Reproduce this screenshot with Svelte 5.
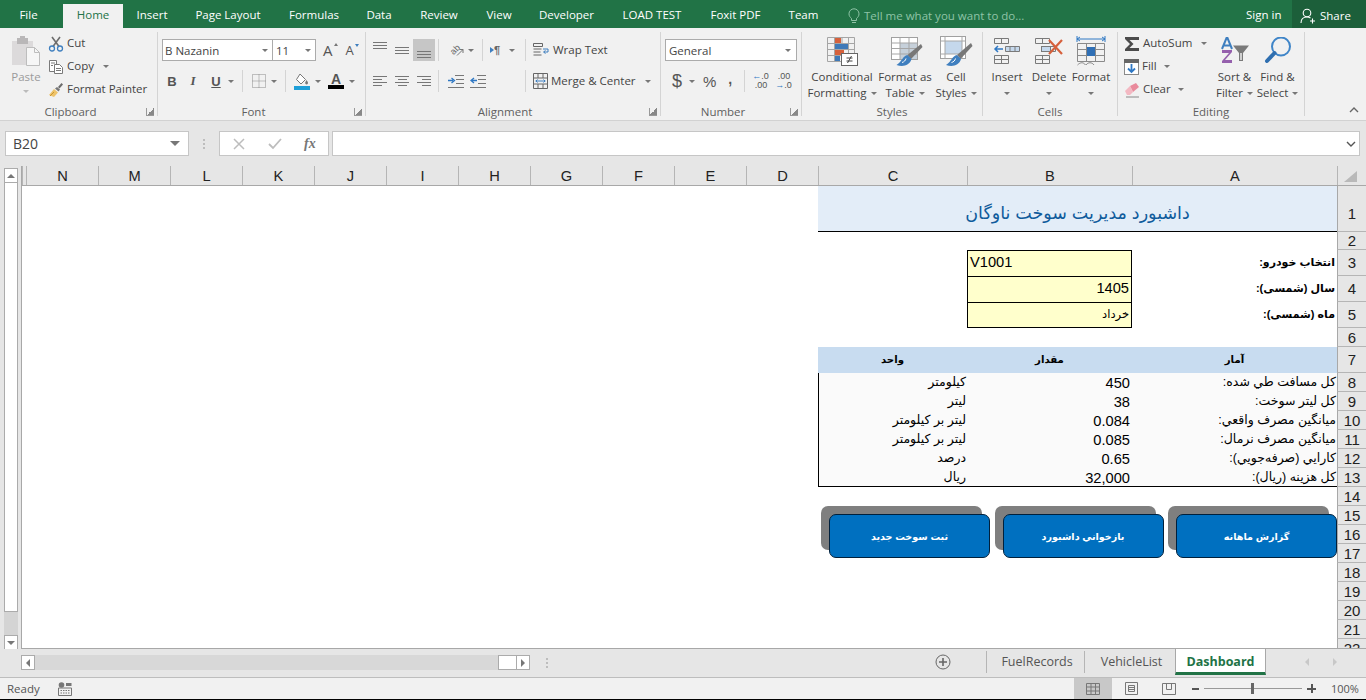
<script>
  const tabs = [
    { label: 'File', w: 57 }, { label: 'Home', w: 60, active: true }, { label: 'Insert', w: 58 },
    { label: 'Page Layout', w: 94 }, { label: 'Formulas', w: 78 }, { label: 'Data', w: 52 },
    { label: 'Review', w: 68 }, { label: 'View', w: 52 }, { label: 'Developer', w: 83 },
    { label: 'LOAD TEST', w: 88 }, { label: 'Foxit PDF', w: 79 }, { label: 'Team', w: 57 }
  ];
  const columns = ['N', 'M', 'L', 'K', 'J', 'I', 'H', 'G', 'F', 'E', 'D'];
  const stats = [
    { name: 'کل مسافت طي شده:', value: '450', unit: 'کیلومتر' },
    { name: 'کل لیتر سوخت:', value: '38', unit: 'لیتر' },
    { name: 'میانگین مصرف واقعي:', value: '0.084', unit: 'لیتر بر کیلومتر' },
    { name: 'میانگین مصرف نرمال:', value: '0.085', unit: 'لیتر بر کیلومتر' },
    { name: 'کارایي (صرفه‌جویي):', value: '0.65', unit: 'درصد' },
    { name: 'کل هزینه (ریال):', value: '32,000', unit: 'ریال' }
  ];
  const buttons = ['گزارش ماهانه', 'بازخواني داشبورد', 'ثبت سوخت جدید'];
  const blankRows = [
    [14, 19], [15, 19], [16, 19], [17, 19], [18, 19], [19, 19], [20, 19], [21, 19], [22, 19]
  ];
</script>

<div class="app">
  <div class="titlebar">
    {#each tabs as tab}
      <div class="tab" class:active={tab.active} style="width:{tab.w}px">{tab.label}</div>
    {/each}
    <div class="tellme">
      <svg width="12" height="16" viewBox="0 0 12 16" fill="none" stroke="#8fc3a6"><path d="M3.5 10.5C2 9 1 8 1 5.8a5 5 0 0 1 10 0c0 2.2-1 3.200-2.500 4.700v2h-5zM4 14.500h4"/></svg>
      <span>Tell me what you want to do...</span>
    </div>
    <div class="signin">Sign in</div>
    <div class="share">
      <svg width="16" height="16" viewBox="0 0 16 16" fill="none" stroke="#fff" stroke-width="1.100"><circle cx="7" cy="5" r="3.800"/><path d="M1 15c0-4 2.500-6 6-6 1.500 0 2.500.4 3.500 1M10 13h5M12.500 10.500v5"/></svg>
      <span>Share</span>
    </div>
  </div>

  <div class="ribbon">
    <div class="group clipboard">
      <div class="body">
        <div class="big paste">
          <div class="big-icon">
            <svg width="30" height="32" viewBox="0 0 30 32"><rect x="1" y="6" width="21" height="24" fill="#dcdadb"/><rect x="6" y="3" width="11" height="6" fill="#b9b7b8"/><rect x="9" y="1" width="5" height="3" fill="#b9b7b8"/><path d="M15.500 12.500h8l5 5v13h-13z" fill="#f6f6f6" stroke="#bdbdbd"/><path d="M23.500 12.500v5h5" fill="none" stroke="#bdbdbd"/></svg>
          </div>
          <div class="big-text muted">Paste</div>
          <i class="caret light"></i>
        </div>
        <div class="stack">
          <div class="small">
            <svg width="16" height="16" viewBox="0 0 16 16" fill="none"><path d="M4 1l7 9.500M12 1L5 10.500" stroke="#6d6d6d" stroke-width="1.600"/><circle cx="4" cy="12.500" r="2.500" stroke="#3f7fbf" stroke-width="1.300"/><circle cx="12" cy="12.500" r="2.500" stroke="#3f7fbf" stroke-width="1.300"/></svg>
            <span>Cut</span>
          </div>
          <div class="small">
            <svg width="16" height="16" viewBox="0 0 16 16" fill="#fff" stroke="#7a7a7a"><path d="M1.500 1.500h7v11h-7z"/><path d="M6.500 5.500h5l3 3v6h-8z"/><path d="M3 4h4M3 6.500h2M8 9.500h5M8 11.500h5" fill="none"/></svg>
            <span>Copy</span>
            <i class="caret copy-caret"></i>
          </div>
          <div class="small">
            <svg width="16" height="16" viewBox="0 0 16 16"><path d="M1 13l5-6 4 3.500-4 4.500z" fill="#eec36a"/><path d="M2 14l4-4" stroke="#c89632"/><path d="M7 6.500l3.500 3 1.500-2-3-2.500z" fill="#777"/><path d="M10 5l3.500-4 1.500 1.500-3.500 4z" fill="#6b6b6b"/></svg>
            <span>Format Painter</span>
          </div>
        </div>
      </div>
      <div class="label lnch">Clipboard<i class="launcher"></i></div>
    </div>

    <div class="group font">
      <div class="body col">
        <div class="line top">
          <div class="select fontname"><span>B Nazanin</span><i class="caret"></i></div>
          <div class="select fontsize"><span>11</span><i class="caret"></i></div>
          <span class="grow big-a">A<i class="up"></i></span>
          <span class="grow small-a">A<i class="down"></i></span>
        </div>
        <div class="line bottom">
          <b class="fmt bold">B</b>
          <span class="fmt italic">I</span>
          <span class="fmt under">U</span>
          <i class="caret"></i>
          <i class="sep"></i>
          <svg class="borders" width="14" height="14" viewBox="0 0 14 14" fill="none" stroke="#8a8a8a" stroke-dasharray="1 1"><path d="M.5.5h13v13H.5zM7 .5v13M.5 7h13"/></svg>
          <i class="caret"></i>
          <i class="sep"></i>
          <svg class="fill-ic" width="16" height="17" viewBox="0 0 16 17"><path d="M6 1l5.500 5.500L7 11 2.500 6.500z" fill="#fff" stroke="#777"/><path d="M12.500 7c1 1.500 1.500 2.300 1.500 3a1.400 1.400 0 0 1-2.800 0c0-.7.500-1.500 1.300-3z" fill="#777"/><rect y="13" width="16" height="4" fill="#1e9fd8"/></svg>
          <i class="caret"></i>
          <span class="color-a">A</span>
          <i class="caret"></i>
        </div>
      </div>
      <div class="label lnch">Font<i class="launcher"></i></div>
    </div>

    <div class="group align">
      <div class="body col">
        <div class="line top">
          <span class="lines t"><i></i><i></i><i></i></span>
          <span class="lines m"><i></i><i></i><i></i></span>
          <span class="lines b on"><i></i><i></i><i></i></span>
          <i class="sep"></i>
          <svg class="orient" width="16" height="16" viewBox="0 0 16 16" fill="none"><text x="2" y="11" transform="rotate(-45 6 9)" font-family="Liberation Sans, sans-serif" font-size="9" fill="#666" stroke="none">ab</text><path d="M8 13.500l6-6M14 11V7.500h-3.500" stroke="#777"/></svg>
          <i class="caret"></i>
          <i class="sep"></i>
          <span class="rtl-ic"><i></i>¶</span>
          <i class="caret rtl-caret"></i>
          <i class="sep"></i>
          <div class="small">
            <svg width="17" height="16" viewBox="0 0 17 16" fill="none" stroke="#666"><path d="M.5 1.500h9v3h-9zM.5 7h8M.5 10h7M.5 13h8"/><path d="M10 7h5v3h-4M12.500 8.500L10.500 10l2 1.500" stroke="#3f7fbf"/></svg>
            <span>Wrap Text</span>
          </div>
        </div>
        <div class="line bottom">
          <span class="lines l"><i></i><i></i><i></i><i></i></span>
          <span class="lines c"><i></i><i></i><i></i><i></i></span>
          <span class="lines r"><i></i><i></i><i></i><i></i></span>
          <i class="sep"></i>
          <svg class="indent" width="16" height="13" viewBox="0 0 16 13" fill="none" stroke="#777"><path d="M7 .5h9M8 4.500h8M8 8.500h8M0 12.500h16"/><path d="M0 5.500h5M3.500 3l3 2.500-3 2.500" stroke="#2f78c4" stroke-width="1.300"/></svg>
          <svg class="outdent" width="16" height="13" viewBox="0 0 16 13" fill="none" stroke="#777"><path d="M7 .5h9M8 4.500h8M8 8.500h8M0 12.500h16"/><path d="M7 5.500H2M4 3L1 5.500 4 8" stroke="#2f78c4" stroke-width="1.300"/></svg>
          <i class="sep far"></i>
          <div class="small">
            <svg width="15" height="16" viewBox="0 0 15 16" fill="none" stroke="#666"><path d="M.5.500h14v15H.5zM.5 5h14M.5 11h14M5 .500V5M10 .500V5M5 11v4.500M10 11v4.500"/><path d="M2.500 8h10M4.500 6.500L3 8l1.500 1.500M10.500 6.500L12 8l-1.500 1.500" stroke="#3f7fbf"/></svg>
            <span>Merge &amp; Center</span>
            <i class="caret merge-caret"></i>
          </div>
        </div>
      </div>
      <div class="label lnch">Alignment<i class="launcher"></i></div>
    </div>

    <div class="group number">
      <div class="body col">
        <div class="line top">
          <div class="select general"><span>General</span><i class="caret"></i></div>
        </div>
        <div class="line bottom">
          <span class="sym dollar">$</span>
          <i class="caret"></i>
          <span class="sym pct">%</span>
          <b class="sym comma">,</b>
          <i class="sep"></i>
          <span class="dec d1"><em>←</em>.0<br />.00</span>
          <span class="dec d2">.00<br /><em>→</em>.0</span>
        </div>
      </div>
      <div class="label lnch">Number<i class="launcher"></i></div>
    </div>

    <div class="group styles">
      <div class="body">
        <div class="big cond">
          <div class="big-icon">
            <svg width="31" height="30" viewBox="0 0 31 30" fill="none"><path d="M.5 1.500h27v24H.5zM7.500 1.500v24M15 1.500v24M21.500 1.500v24M.5 7.500h27M.5 13.500h27M.5 19.500h27" stroke="#a5a5a5"/><rect x="8" y="2" width="6" height="5" fill="#d6613c"/><rect x="8" y="8" width="13" height="5" fill="#3e79b8"/><rect x="8" y="14" width="9" height="5" fill="#d6613c"/><rect x="8" y="20" width="5" height="5" fill="#3e79b8"/><rect x="14.500" y="17.500" width="16" height="12" fill="#fff" stroke="#666"/><path d="M19.500 22h6M19.500 25h6M24.500 20l-4 7" stroke="#444"/></svg>
          </div>
          <div class="big-text">Conditional<br />Formatting<i class="caret inl"></i></div>
        </div>
        <div class="big astable">
          <div class="big-icon">
            <svg width="36" height="32" viewBox="0 0 36 32" fill="none"><rect x="4.500" y="2.500" width="26" height="22" fill="#fff" stroke="#a0a0a0"/><rect x="13" y="8" width="17" height="16" fill="#c6d0da"/><path d="M13 2.500v22M22 2.500v22M4.500 8h26M4.500 13.500h26M4.500 19h26" stroke="#a5a5a5"/><path d="M34 9L20.500 20l3.500 4L35.500 12z" fill="#777"/><path d="M20.500 20c-5 1-5 6-11 10 6 2 13 1 15-6z" fill="#3f7fbf"/><path d="M15 27.500c2-.5 3.500-2 4-4" stroke="#fff"/></svg>
          </div>
          <div class="big-text">Format as<br />Table<i class="caret inl"></i></div>
        </div>
        <div class="big cellst">
          <div class="big-icon">
            <svg width="34" height="32" viewBox="0 0 34 32" fill="none"><rect x="1.500" y="1.500" width="25" height="22" fill="#fff" stroke="#a0a0a0"/><rect x="6" y="6" width="17" height="13" fill="#c5d8ec"/><path d="M6 1.500v22M23 1.500v22M1.500 6h25M1.500 19h25" stroke="#a8a8a8"/><path d="M32 8L18 20l3.500 4L33.500 11z" fill="#777"/><path d="M18 20c-5 1-5 6-11 10 6 2 13 1 15-6z" fill="#3f7fbf"/><path d="M12.500 27.500c2-.5 3.500-2 4-4" stroke="#fff"/></svg>
          </div>
          <div class="big-text">Cell<br />Styles<i class="caret inl"></i></div>
        </div>
      </div>
      <div class="label">Styles</div>
    </div>

    <div class="group cells">
      <div class="body">
        <div class="big ins">
          <div class="big-icon">
            <svg width="28" height="28" viewBox="0 0 28 28" fill="none" stroke="#7a7a7a"><path d="M1.500 1.500h14v5h-14zM8.500 1.500v5M1.500 18.500h14v8h-14zM1.500 22.500h14M8.500 18.500v8"/><path d="M12.500 9.500h14v5h-14zM17 9.500v5M22 9.500v5" fill="#c5d8ec"/><path d="M10 12H2M5 9l-3 3 3 3" stroke="#2f78c4" stroke-width="1.500"/></svg>
          </div>
          <div class="big-text">Insert<br /><i class="caret"></i></div>
        </div>
        <div class="big del">
          <div class="big-icon">
            <svg width="30" height="28" viewBox="0 0 30 28" fill="none" stroke="#7a7a7a"><path d="M1.500 1.500h14v5h-14zM8.500 1.500v5M1.500 18.500h14v8h-14zM1.500 22.500h14M8.500 18.500v8M7.500 9.500h14v5h-14z"/><rect x="7.500" y="9.500" width="9" height="5" fill="#c5d8ec"/><path d="M15 3l13 14M28 3L15 17" stroke="#d6603c" stroke-width="2.200"/></svg>
          </div>
          <div class="big-text">Delete<br /><i class="caret"></i></div>
        </div>
        <div class="big fmtc">
          <div class="big-icon">
            <svg width="30" height="31" viewBox="0 0 30 31" fill="none" stroke="#8a8a8a"><path d="M1 1v6M29 1v6" stroke="#2f78c4"/><path d="M1 4h28M4 2L1 4l3 2M26 2l3 2-3 2" stroke="#2f78c4"/><path d="M1.500 8.500h27v18h-27zM1.500 14.500h27M1.500 20.500h27M10.500 8.500v18M19.500 8.500v18"/><rect x="11" y="12" width="8" height="9" fill="#2f6fb5" stroke="none"/><path d="M1.500 30c3-3 6-3 8 0M10 30c2-3 6-3 8 0"/></svg>
          </div>
          <div class="big-text">Format<br /><i class="caret"></i></div>
        </div>
      </div>
      <div class="label">Cells</div>
    </div>

    <div class="group editing">
      <div class="body">
        <div class="stack editstack">
          <div class="small">
            <svg width="16" height="16" viewBox="0 0 16 16"><path d="M1 1h14v3H5.500L9.500 8l-4 4H15v3H1v-2l5-5-5-5z" fill="#4b4b4b"/></svg>
            <span>AutoSum</span>
            <i class="caret auto-caret"></i>
          </div>
          <div class="small">
            <svg width="15" height="16" viewBox="0 0 15 16"><rect x=".5" y=".5" width="14" height="15" fill="#fff" stroke="#8a8a8a"/><rect width="15" height="4" fill="#666"/><path d="M7.500 5v8M4 9.500l3.500 3.500L11 9.500" fill="none" stroke="#2f78c4" stroke-width="1.800"/></svg>
            <span>Fill</span>
            <i class="caret inl"></i>
          </div>
          <div class="small">
            <svg width="16" height="16" viewBox="0 0 16 16"><path d="M6 4l6-3 3 4-6 5z" fill="#e98a9c"/><path d="M1 9l5-5 3 6-3 3H3z" fill="#f3b8c2"/><path d="M2 15h13" stroke="#888"/></svg>
            <span>Clear</span>
            <i class="caret inl"></i>
          </div>
        </div>
        <div class="big sortf">
          <div class="big-icon">
            <svg width="30" height="28" viewBox="0 0 30 28"><path d="M2 12L6.500 1h1L12 12M3.500 8.500h7" fill="none" stroke="#3f7fbf" stroke-width="2"/><path d="M2 13h10v2l-7 8h7v3H2v-2l7-8H2z" fill="#9560ad"/><path d="M13 8.500h16l-6 7.500v8h-4v-8z" fill="#7a7a7a"/><path d="M20 16h2v7h-2z" fill="#d0d0d0"/></svg>
          </div>
          <div class="big-text">Sort &amp;<br />Filter<i class="caret inl"></i></div>
        </div>
        <div class="big findsel">
          <div class="big-icon">
            <svg width="28" height="28" viewBox="0 0 28 28" fill="none"><circle cx="17" cy="9.500" r="9" stroke="#3f85c8" stroke-width="2"/><path d="M10.500 16L3 24" stroke="#2f6fb0" stroke-width="4" stroke-linecap="round"/></svg>
          </div>
          <div class="big-text">Find &amp;<br />Select<i class="caret inl"></i></div>
        </div>
      </div>
      <div class="label">Editing</div>
    </div>

    <svg class="collapse" width="10" height="6" viewBox="0 0 10 6" fill="none" stroke="#666" stroke-width="1.400"><path d="M1 5l4-4 4 4"/></svg>
  </div>

  <div class="formulabar">
    <div class="namebox"><span>B20</span><i class="caret dark"></i></div>
    <div class="vdots"><i></i><i></i><i></i></div>
    <div class="fxbox">
      <svg width="12" height="12" viewBox="0 0 12 12" fill="none" stroke="#bdbdbd" stroke-width="1.500"><path d="M1 1l10 10M11 1L1 11"/></svg>
      <svg width="14" height="12" viewBox="0 0 14 12" fill="none" stroke="#bdbdbd" stroke-width="1.800"><path d="M1 6l4 4 8-9"/></svg>
      <em>fx</em>
    </div>
    <div class="input">
      <svg width="10" height="6" viewBox="0 0 10 6" fill="none" stroke="#555" stroke-width="1.400"><path d="M1 1l4 4 4-4"/></svg>
    </div>
  </div>

  <div class="sheet">
    <div class="vscroll">
      <div class="vbtn"><i class="tri-up"></i></div>
      <div class="vthumb"></div>
      <div class="vtrack"></div>
      <div class="vbtn"><i class="tri-down"></i></div>
    </div>
    <div class="grid" dir="rtl">
      <div class="colhead">
        <div class="corner"><i></i></div>
        <div class="ch a">A</div>
        <div class="ch b">B</div>
        <div class="ch c">C</div>
        {#each columns.slice().reverse() as col}
          <div class="ch std">{col}</div>
        {/each}
        <div class="ch last"></div>
      </div>

      <div class="row" style="height:46px">
        <div class="rh tall">1</div>
        <div class="title">داشبورد مدیریت سوخت ناوگان</div>
      </div>
      <div class="row" style="height:18px"><div class="rh">2</div></div>
      <div class="row" style="height:26px">
        <div class="rh">3</div>
        <div class="cell a lab">انتخاب خودرو:</div>
        <div class="cell b inp first" dir="ltr">V1001</div>
      </div>
      <div class="row" style="height:26px">
        <div class="rh">4</div>
        <div class="cell a lab">سال (شمسی):</div>
        <div class="cell b inp num">1405</div>
      </div>
      <div class="row" style="height:26px">
        <div class="rh">5</div>
        <div class="cell a lab">ماه (شمسی):</div>
        <div class="cell b inp fa">خرداد</div>
      </div>
      <div class="row" style="height:19px"><div class="rh">6</div></div>
      <div class="row" style="height:26px">
        <div class="rh">7</div>
        <div class="cell a th">آمار</div>
        <div class="cell b th">مقدار</div>
        <div class="cell c th">واحد</div>
      </div>
      {#each stats as s, i}
        <div class="row" style="height:19px">
          <div class="rh">{i + 8}</div>
          <div class="cell a td" class:end={i === 5}>{s.name}</div>
          <div class="cell b td val" class:end={i === 5}>{s.value}</div>
          <div class="cell c td unit" class:end={i === 5}>{s.unit}</div>
        </div>
      {/each}
      {#each blankRows as r}
        <div class="row" style="height:{r[1]}px"><div class="rh">{r[0]}</div></div>
      {/each}

      <div class="macros">
        {#each buttons as b}
          <div class="macro"><span>{b}</span></div>
        {/each}
      </div>
    </div>
  </div>

  <div class="sheetbar">
    <div class="hscroll">
      <div class="hbtn"><i class="tri-left"></i></div>
      <div class="htrack"></div>
      <div class="hthumb"></div>
      <div class="hbtn"><i class="tri-right"></i></div>
    </div>
    <div class="vdots h"><i></i><i></i><i></i></div>
    <div class="addsheet">
      <svg width="16" height="16" viewBox="0 0 16 16" fill="none" stroke="#666"><circle cx="8" cy="8" r="7"/><path d="M8 4v8M4 8h8" stroke-width="1.600"/></svg>
    </div>
    <div class="stab fuel">FuelRecords</div>
    <div class="stab veh">VehicleList</div>
    <div class="stab cur">Dashboard</div>
    <div class="navs"><i class="tri-left pale"></i><i class="tri-right pale"></i></div>
  </div>

  <div class="status">
    <span class="ready">Ready</span>
    <svg class="macro-ic" width="14" height="14" viewBox="0 0 14 14" fill="none"><circle cx="3.500" cy="3" r="2.800" fill="#777"/><rect x="8" y="1" width="5.500" height="3" fill="#777"/><path d="M.5 6h13v7.500H.5z" stroke="#777"/><path d="M2.500 8.500h9M2.500 11h9" stroke="#777" stroke-dasharray="1.500 1"/></svg>
    <div class="views">
      <div class="view on"><svg width="14" height="12" viewBox="0 0 14 12" fill="none" stroke="#777"><path d="M.5.500h13v11H.5zM.5 4h13M.5 8h13M5 .500v11M9.500 .500v11"/></svg></div>
      <div class="view"><svg width="13" height="13" viewBox="0 0 13 13" fill="none" stroke="#777"><path d="M.5.500h12v12H.5zM3.500 3.500h6v6h-6zM3.500 5.500h6M3.500 7.500h6"/></svg></div>
      <div class="view"><svg width="14" height="12" viewBox="0 0 14 12" fill="none" stroke="#777"><path d="M.5.500h13v11H.5zM4.500 .500v6h5v-6"/></svg></div>
    </div>
    <div class="zoom">
      <i class="minus"></i>
      <div class="ztrack"><i></i></div>
      <i class="plus"></i>
      <span>100%</span>
    </div>
  </div>
  <div class="blackbar"></div>
</div>

<style>
  :global(body) { margin: 0; background: #fff; }
  .app {
    width: 1366px; height: 700px; overflow: hidden;
    display: flex; flex-direction: column;
    font-family: "Open Sans", "Noto Sans", sans-serif; font-size: 11.500px; color: #444;
  }
  i { display: block; font-style: normal; }

  /* title bar and tabs */
  .titlebar {
    height: 28px; flex: none; background: #217346; color: #fff;
    display: flex; align-items: flex-end; position: relative;
  }
  .tab { height: 24px; line-height: 22px; text-align: center; flex: none; }
  .tab:first-child { margin-right: 6px; }
  .tab.active { background: #f1f1f1; color: #217346; }
  .tellme {
    margin-left: 16px; height: 24px; width: 400px;
    display: flex; align-items: center; gap: 4px; color: #8fc3a6; line-height: 22px;
  }
  .signin { height: 24px; line-height: 22px; margin-left: 0; width: 46px; flex: none; }
  .share {
    margin-left: 0; width: 74px; height: 28px; flex: none; background: #1c5f3a;
    display: flex; align-items: center; gap: 4px; padding-left: 8px; padding-top: 3px; box-sizing: border-box;
  }

  /* ribbon */
  .ribbon {
    height: 93px; flex: none; box-sizing: border-box; background: #f1f1f1;
    border-bottom: 1px solid #d2d2d2; padding-top: 4px; display: flex; position: relative;
  }
  .group {
    height: 84px; flex: none; box-sizing: border-box; border-right: 1px solid #d4d4d4;
    display: flex; flex-direction: column;
  }
  .body { height: 74px; display: flex; flex: none; position: relative; }
  .body.col { flex-direction: column; }
  .label {
    height: 10px; line-height: 12px; text-align: center; color: #5f5f5f; position: relative;
  }
  .label.lnch { padding-right: 16px; }
  .launcher {
    position: absolute; right: 3px; top: 2px; width: 7px; height: 7px;
    border-left: 1px solid #999; border-bottom: 1px solid #999;
    background: linear-gradient(135deg, transparent 50%, #888 50%);
  }
  .clipboard { width: 158px; }
  .font { width: 208px; }
  .align { width: 295px; }
  .number { width: 141px; }
  .styles { width: 181px; }
  .cells { width: 135px; }
  .editing { width: 187px; }

  .caret {
    width: 0; height: 0; flex: none;
    border-left: 3px solid transparent; border-right: 3px solid transparent; border-top: 3px solid #777;
  }
  .caret.light { border-top-color: #bbb; margin: 5px auto 0; }
  .caret.dark { border-left-width: 5px; border-right-width: 5px; border-top-width: 5px; border-top-color: #777; }
  .caret.inl { display: inline-block; margin-left: 4px; vertical-align: 2px; }

  .big { display: flex; flex-direction: column; align-items: center; flex: none; }
  .big-icon { height: 37px; display: flex; align-items: center; justify-content: center; flex: none; }
  .big-text { line-height: 16px; text-align: center; white-space: nowrap; }
  .big-text .caret:not(.inl) { display: inline-block; vertical-align: 2px; }
  .muted { color: #9b9b9b; }
  .paste { width: 40px; margin-left: 6px; }
  .stack { display: flex; flex-direction: column; margin-left: 2px; }
  .small { height: 23px; display: flex; align-items: center; gap: 3px; white-space: nowrap; }
  .small span { margin-bottom: 2px; }
  .copy-caret { margin-left: 6px; }

  .line { display: flex; align-items: center; flex: none; }
  .line.top { height: 22px; margin-top: 7px; }
  .line.bottom { height: 22px; margin-top: 9px; }
  .sep { width: 1px; height: 22px; background: #d4d4d4; flex: none; }
  .select {
    height: 22px; box-sizing: border-box; background: #fff; border: 1px solid #ababab;
    display: flex; align-items: center; justify-content: space-between; padding: 0 4px 0 2px;
  }
  .fontname { width: 111px; margin-left: 4px; }
  .fontsize { width: 43px; margin-left: 0; border-left: 0; padding-left: 3px; }
  .grow { font-size: 15px; position: relative; color: #555; flex: none; }
  .big-a { margin-left: 7px; }
  .small-a { font-size: 13px; margin-left: 13px; }
  .grow i { position: absolute; left: 11px; top: 3px; width: 0; height: 0; border-left: 2px solid transparent; border-right: 2px solid transparent; }
  .small-a i { left: 9px; }
  .up { border-bottom: 3px solid #777; }
  .down { border-top: 3px solid #3f7fbf; }
  .fmt { font-size: 13px; color: #555; font-family: "Liberation Sans", sans-serif; flex: none; width: 10px; text-align: center; }
  .bold { margin-left: 9px; }
  .italic { margin-left: 11px; font-style: italic; font-weight: 700; font-family: "Liberation Serif", serif; }
  .under { margin-left: 13px; text-decoration: underline; font-weight: 700; }
  .font .line.bottom .caret:nth-of-type(1) { margin-left: 7px; }
  .font .line.bottom .caret { margin-left: 5px; }
  .font .line.bottom .sep { margin-left: 8px; }
  .borders { margin-left: 9px; flex: none; }
  .fill-ic { margin-left: 8px; flex: none; }
  .color-a {
    margin-left: 7px; font-family: "Liberation Sans", sans-serif; font-weight: 700; font-size: 14px; line-height: 12px;
    color: #555; width: 16px; text-align: center; border-bottom: 4px solid #000; flex: none;
  }

  .lines { width: 22px; height: 22px; display: flex; flex-direction: column; gap: 2px; box-sizing: border-box; padding: 3px 4px; flex: none; align-items: center; }
  .lines i { height: 1px; width: 14px; background: #777; }
  .lines.t { justify-content: flex-start; }
  .lines.m { justify-content: center; }
  .lines.b { justify-content: flex-end; }
  .lines.on { background: #c6c6c6; }
  .lines.l, .lines.c, .lines.r { justify-content: center; gap: 2px; }
  .lines.l { align-items: flex-start; }
  .lines.r { align-items: flex-end; }
  .lines.l i:nth-child(even), .lines.c i:nth-child(even), .lines.r i:nth-child(even) { width: 9px; }
  .align .lines:first-child { margin-left: 3px; }
  .align .sep { margin: 0 7px 0 3px; }
  .align .sep.far { margin-left: 39px; }
  .orient { margin-left: 3px; flex: none; }
  .align .caret { margin-left: 3px; margin-right: 5px; }
  .align .caret.rtl-caret { margin-left: 6px; margin-right: 7px; }
  .align .caret.merge-caret { margin-left: 6px; }
  .rtl-ic { display: flex; align-items: center; color: #666; font-size: 11px; font-family: "Liberation Sans", sans-serif; font-weight: 700; width: 13px; flex: none; }
  .rtl-ic i { width: 0; height: 0; border-top: 3px solid transparent; border-bottom: 3px solid transparent; border-left: 4px solid #3f7fbf; }
  .indent { margin-left: 2px; flex: none; }
  .outdent { margin-left: 6px; flex: none; }

  .general { width: 132px; margin-left: 4px; padding: 0 5px 0 3px; }
  .sym { color: #555; flex: none; font-family: "Liberation Sans", sans-serif; font-size: 16px; }
  .dollar { margin-left: 11px; font-size: 18px; }
  .number .caret { margin: 0 0 0 7px; }
  .pct { margin-left: 8px; font-size: 15px; }
  .comma { margin-left: 12px; font-size: 14px; line-height: 10px; height: 14px; }
  .number .sep { margin-left: 12px; }
  .dec { font-size: 9px; line-height: 9px; font-family: "Liberation Sans", sans-serif; color: #555; text-align: right; flex: none; width: 15px; }
  .dec em { font-style: normal; color: #2f78c4; }
  .d1 { margin-left: 7px; }
  .d2 { margin-left: 8px; }

  .cond { width: 64px; margin-left: 8px; }
  .astable { width: 58px; margin-left: 2px; }
  .cellst { width: 44px; margin-left: 0; }

  .ins { width: 42px; margin-left: 3px; }
  .del { width: 42px; }
  .fmtc { width: 42px; }

  .editstack { width: 89px; margin-left: 6px; margin-right: 0; }
  .auto-caret { margin-left: 6px; }
  .sortf { width: 43px; margin-left: 0; }
  .findsel { width: 43px; margin-left: 0; }

  .collapse { position: absolute; right: 7px; top: 79px; }

  /* formula bar */
  .formulabar {
    height: 45px; flex: none; background: #e6e6e6; box-sizing: border-box; padding: 10px 6px 10px 5px;
    display: flex; align-items: stretch; font-family: "Liberation Sans", sans-serif;
  }
  .namebox {
    width: 184px; box-sizing: border-box; background: #fff; border: 1px solid #c6c6c6; color: #444;
    font-family: "Open Sans", sans-serif; font-size: 14px;
    display: flex; align-items: center; justify-content: space-between; padding: 0 8px 0 7px; flex: none;
  }
  .vdots { display: flex; flex-direction: column; gap: 2px; justify-content: center; margin: 0 14px; flex: none; }
  .vdots i { width: 2px; height: 2px; background: #bdbdbd; }
  .fxbox {
    width: 110px; box-sizing: border-box; background: #fff; border: 1px solid #c6c6c6; flex: none;
    display: flex; align-items: center; gap: 23px; padding-left: 13px;
  }
  .fxbox em { font-family: "Liberation Serif", serif; font-size: 14px; color: #777; font-weight: 700; margin-left: -1px; }
  .input {
    flex: 1; margin-left: 3px; background: #fff; border: 1px solid #c6c6c6;
    display: flex; align-items: center; justify-content: flex-end; padding-right: 3px;
  }

  /* sheet */
  .sheet { height: 483px; flex: none; display: flex; background: #e6e6e6; overflow: hidden; }
  .vscroll { width: 21px; flex: none; display: flex; flex-direction: column; align-items: flex-start; padding: 2px 0 0 4px; box-sizing: border-box; }
  .vbtn { width: 14px; height: 15px; box-sizing: border-box; background: #fff; border: 1px solid #ababab; display: flex; align-items: center; justify-content: center; flex: none; }
  .vthumb { width: 14px; height: 429px; box-sizing: border-box; background: #fff; border: 1px solid #ababab; border-top: 0; flex: none; }
  .vtrack { width: 14px; height: 23px; background: #d4d4d4; flex: none; }
  .tri-up, .tri-down { width: 0; height: 0; border-left: 4px solid transparent; border-right: 4px solid transparent; }
  .tri-up { border-bottom: 4px solid #777; }
  .tri-down { border-top: 4px solid #777; }
  .tri-left, .tri-right { width: 0; height: 0; border-top: 4px solid transparent; border-bottom: 4px solid transparent; }
  .tri-left { border-right: 4px solid #777; }
  .tri-right { border-left: 4px solid #777; }
  .tri-left.pale { border-right-color: #c8c8c8; }
  .tri-right.pale { border-left-color: #c8c8c8; }

  .grid {
    flex: 1; position: relative; overflow: hidden; background: #fff;
    border-bottom: 1px solid #a8a8a8; border-left: 1px solid #a8a8a8; box-sizing: border-box;
    font-family: "Liberation Sans", "DejaVu Sans", sans-serif; color: #000;
  }
  .colhead { height: 20px; display: flex; background: #e6e6e6; border-bottom: 1px solid #a8a8a8; box-sizing: border-box; }
  .corner { width: 29px; flex: none; border-left: 1px solid #b5b5b5; box-sizing: border-box; position: relative; }
  .corner i { position: absolute; left: 6px; bottom: 3px; width: 0; height: 0; border-top: 11px solid transparent; border-right: 13px solid #b9b9b9; }
  .ch { flex: none; box-sizing: border-box; border-left: 1px solid #b5b5b5; text-align: center; line-height: 21px; font-size: 14.670px; color: #222; }
  .ch.a, .cell.a { width: 205px; }
  .ch.b, .cell.b { width: 165px; }
  .ch.c, .cell.c { width: 149px; }
  .ch.std { width: 72px; }
  .ch.last { flex: 1; }

  .row { display: flex; }
  .rh {
    width: 29px; flex: none; box-sizing: border-box; background: #e6e6e6; color: #222;
    border-bottom: 1px solid #b5b5b5; border-left: 1px solid #a8a8a8;
    font-size: 15px; text-align: center; display: flex; align-items: center; justify-content: center;
  }
  .rh.tall { padding-top: 10px; }
  .title {
    width: 519px; flex: none; box-sizing: border-box; background: #e3edf8; color: #0f5b9c;
    border-bottom: 1px solid #000; text-align: center; font-size: 17.500px; line-height: 54px;
  }
  .cell { flex: none; box-sizing: border-box; white-space: nowrap; }
  .lab { font-size: 11px; font-weight: 700; line-height: 25px; padding-right: 2px; }
  .inp { background: #ffffcc; border: 1px solid #000; border-bottom: 0; font-size: 14.670px; line-height: 23px; padding: 0 2px; }
  .row:nth-child(6) .inp { border-bottom: 1px solid #000; }
  .num { text-align: right; direction: ltr; }
  .fa { font-size: 11.500px; text-align: right; }
  .first { text-align: left; }
  .th { background: #c8dcf0; font-size: 10.200px; font-weight: 700; text-align: center; line-height: 26px; }
  .td { background: #fafafa; font-size: 12.500px; line-height: 19px; padding-right: 1px; }
  .td.val { font-size: 14.670px; direction: ltr; text-align: right; padding: 0 2px; line-height: 20px; }
  .td.unit { border-left: 1px solid #000; padding-right: 1px; text-align: right; }
  .td.end { border-bottom: 1px solid #000; }

  .macros {
    position: absolute; top: 348px; right: 29px; display: flex; gap: 12.500px; flex-direction: row;
  }
  .macro {
    width: 161px; height: 44px; box-sizing: border-box; background: #0070c0; border: 1px solid #00203c; border-radius: 7px;
    box-shadow: -8px -8px 0 #7f7f7f; color: #fff; font-size: 9.600px; font-weight: 700;
    display: flex; align-items: center; justify-content: center;
  }

  /* sheet tabs */
  .sheetbar { height: 28px; flex: none; background: #e6e6e6; display: flex; align-items: flex-start; position: relative; }
  .hscroll { display: flex; margin: 6px 0 0 21px; width: 509px; flex: none; }
  .hbtn { width: 14px; height: 15px; box-sizing: border-box; background: #fff; border: 1px solid #ababab; display: flex; align-items: center; justify-content: center; flex: none; }
  .htrack { width: 463px; height: 15px; background: #d8d8d8; flex: none; }
  .hthumb { width: 18px; height: 15px; box-sizing: border-box; background: #fff; border: 1px solid #ababab; border-right: 0; flex: none; }
  .vdots.h { margin: 6px 0 0 16px; height: 15px; }
  .addsheet { margin: 5px 0 0 387px; flex: none; }
  .stab { height: 22px; line-height: 22px; text-align: center; flex: none; margin-top: 2px; box-sizing: border-box; color: #555; font-size: 12.500px; }
  .fuel { margin-left: 35px; width: 98px; border-left: 1px solid #b5b5b5; padding-left: 3px; }
  .veh { width: 91px; border-left: 1px solid #b5b5b5; padding-left: 3px; }
  .stab.cur {
    width: 91px; height: 26px; margin-top: 0; background: #fff; color: #217346; font-weight: 700;
    border-left: 1px solid #a8a8a8; border-right: 1px solid #a8a8a8; border-bottom: 3px solid #217346; line-height: 25px;
  }
  .navs { display: flex; gap: 24px; margin: 9px 0 0 39px; flex: none; }

  /* status bar */
  .status {
    height: 22px; flex: none; box-sizing: border-box; background: #f1f1f1; border-top: 1px solid #bdbdbd;
    display: flex; align-items: center; position: relative;
  }
  .ready { margin-left: 7px; width: 51px; flex: none; color: #555; }
  .macro-ic { flex: none; }
  .views { display: flex; margin-left: 1002px; flex: none; align-self: stretch; }
  .view { width: 38px; display: flex; align-items: center; justify-content: center; flex: none; }
  .view.on { background: #c8c8c8; }
  .zoom { display: flex; align-items: center; margin-left: 4px; flex: none; }
  .minus { width: 7px; height: 2px; background: #555; }
  .ztrack { width: 98px; height: 1px; background: #999; margin: 0 5px; position: relative; }
  .ztrack i { position: absolute; left: 47px; top: -5px; width: 3px; height: 11px; background: #666; }
  .plus { width: 9px; height: 9px; background: linear-gradient(#555, #555) center / 9px 2px no-repeat, linear-gradient(#555, #555) center / 2px 9px no-repeat; }
  .zoom span { margin-left: 15px; font-size: 11px; color: #555; }
  .blackbar { flex: 1; background: #000; }
</style>
